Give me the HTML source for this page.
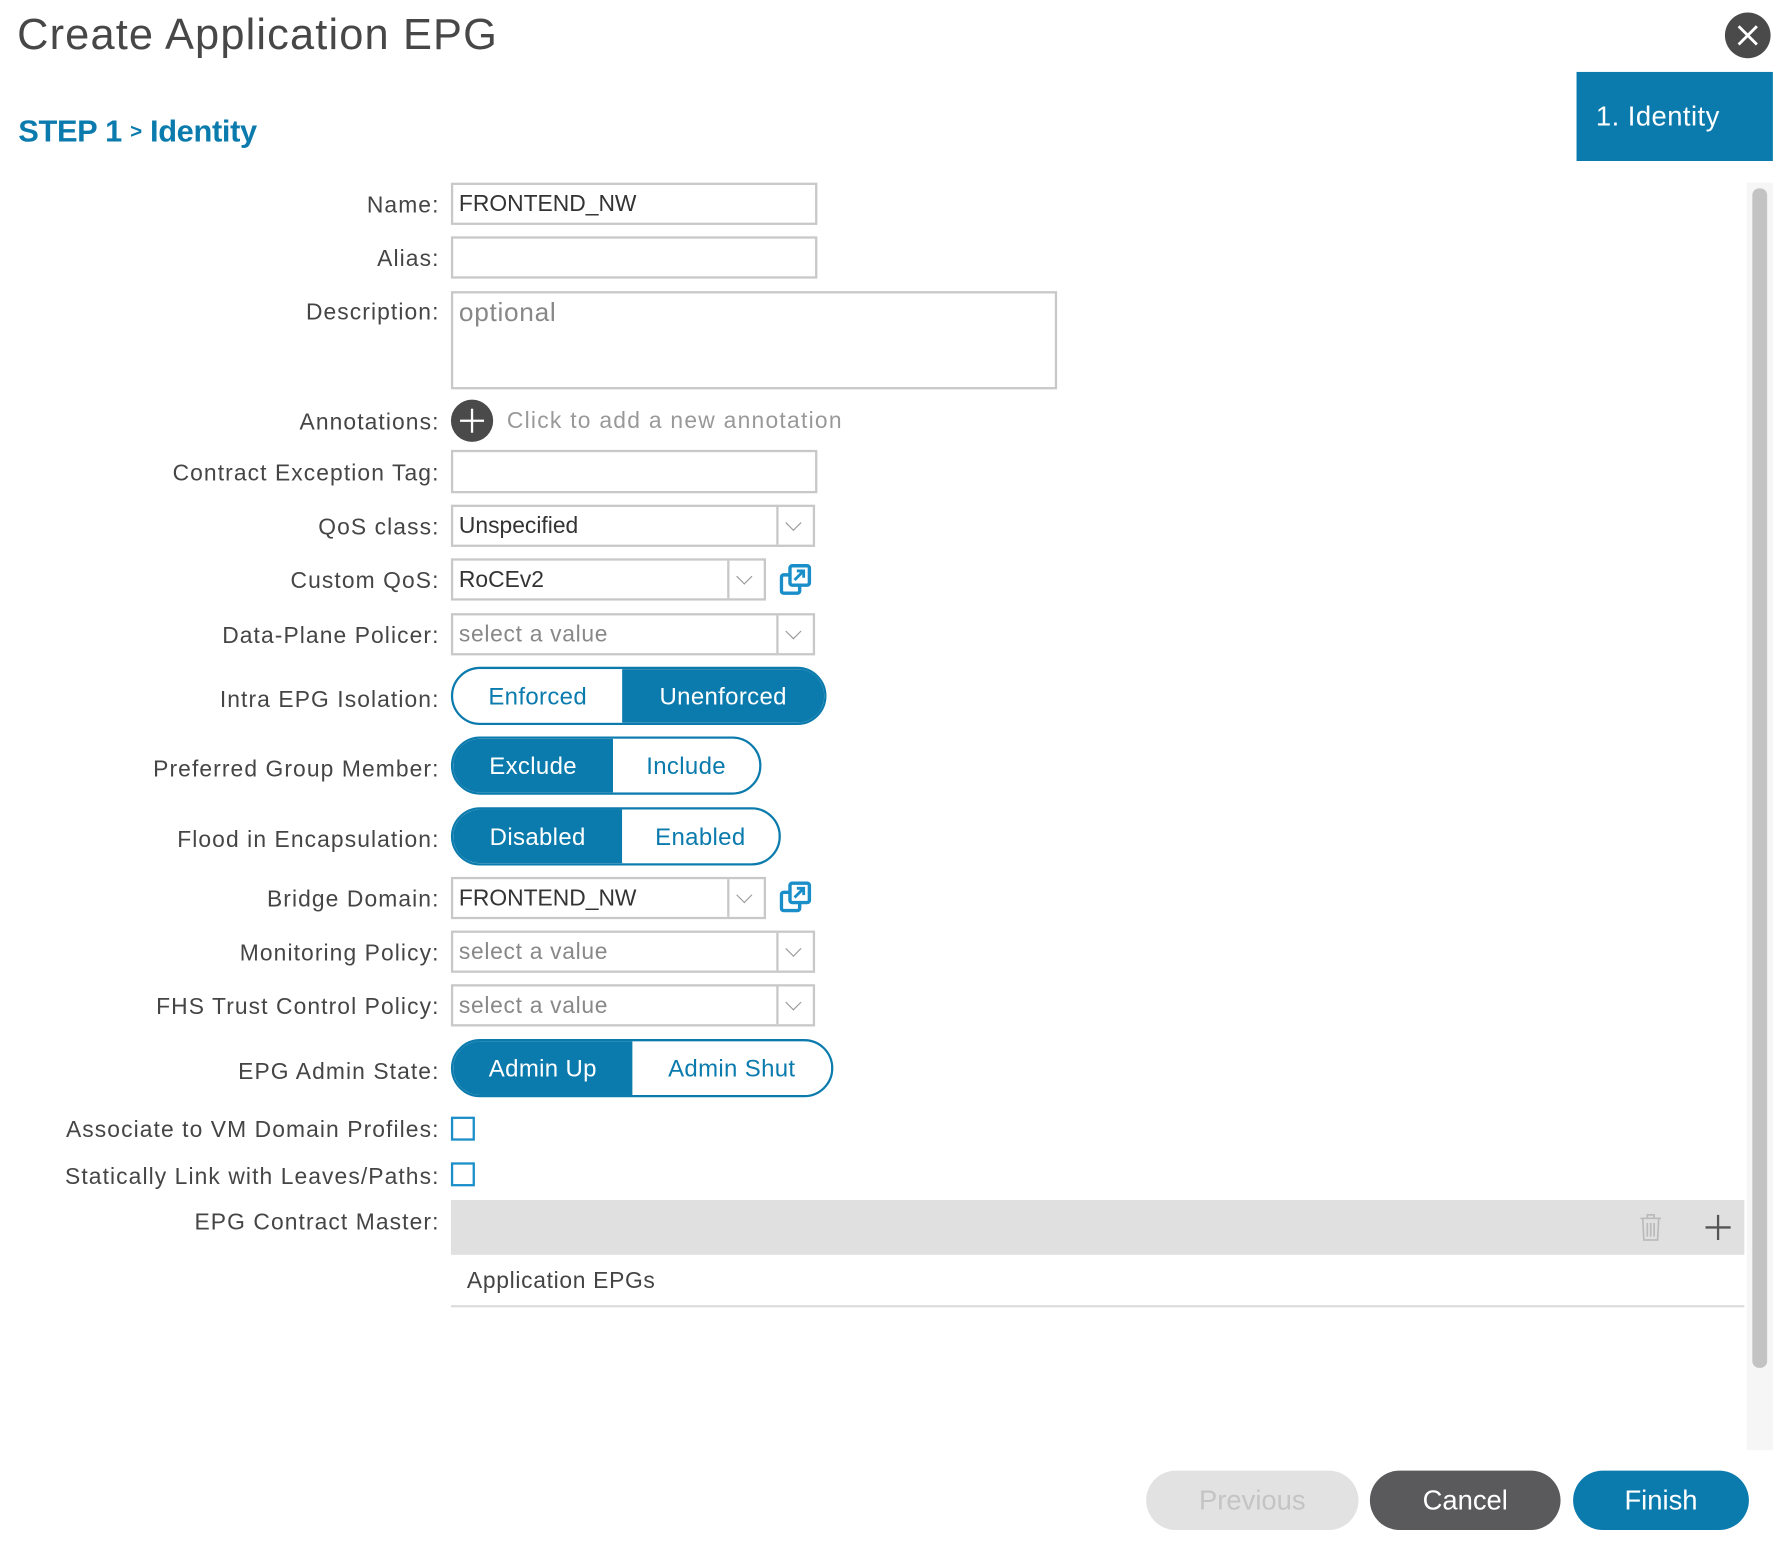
<!DOCTYPE html>
<html><head><meta charset="utf-8"><style>
html,body{margin:0;padding:0;background:#fff;overflow:hidden;width:1790px;height:1554px}
#w{position:absolute;left:0;top:0;width:1568px;height:1361px;transform:scale(1.14158,1.1418);transform-origin:0 0;font-family:"Liberation Sans",sans-serif;color:#444}
.a{position:absolute}
.l{position:absolute;right:1183px;font-size:20px;color:#454545;white-space:nowrap;line-height:24px;letter-spacing:0.95px;margin-top:2px}
.in{position:absolute;left:395px;border:2px solid #c8c8c8;box-sizing:border-box;background:#fff;font-size:20px;color:#333;padding-left:5px;line-height:35px}
.sel .dv{position:absolute;right:0;top:0;bottom:0;width:30px;border-left:2px solid #c8c8c8}
.sel .dv:after{content:"";position:absolute;left:8px;top:9px;width:9px;height:9px;border-right:1.5px solid #999;border-bottom:1.5px solid #999;transform:rotate(45deg)}
.ph{color:#888;letter-spacing:0.6px}
.tg{position:absolute;left:395px;height:51px;border:2px solid #0b7bad;border-radius:26px;box-sizing:border-box;overflow:hidden;display:flex;font-size:21px;letter-spacing:0.3px}
.tg div{display:flex;align-items:center;justify-content:center;color:#0b7bad;background:#fff;padding-top:3px}
.tg .on{background:#0b7bad;color:#fff}
.cb{position:absolute;left:395px;width:21px;height:21px;border:2px solid #1a8ec9;box-sizing:border-box;background:#fff}
.btn{position:absolute;top:1288px;height:52px;border-radius:26px;display:flex;align-items:center;justify-content:center;font-size:24px;padding-top:2px;box-sizing:border-box}
</style></head><body><div id="w">
<div class="a" style="left:15px;top:10px;font-size:38px;color:#474747;letter-spacing:1px">Create Application EPG</div>
<div class="a" style="left:1511px;top:11px;width:40px;height:40px;border-radius:50%;background:#4a4a4a"><svg width="40" height="40"><path d="M12 12L28 28M28 12L12 28" stroke="#fff" stroke-width="2.5"/></svg></div>
<div class="a" style="left:1381px;top:63px;width:172px;height:78px;background:#0b7bad;color:#fff;font-size:24px;line-height:80px;padding-left:17px;box-sizing:border-box;letter-spacing:0.4px">1. Identity</div>
<div class="a" style="left:16px;top:100px;font-size:27px;font-weight:bold;color:#0b7bad;letter-spacing:-0.3px">STEP 1 <span style="font-size:18px;position:relative;top:-3px">&gt;</span> Identity</div>
<div class="a" style="left:1530px;top:160px;width:23px;height:1110px;background:#f6f6f6"></div>
<div class="a" style="left:1535px;top:165px;width:13px;height:1033px;background:#c3c3c3;border-radius:6px"></div>

<div class="l" style="top:166px">Name:</div>
<div class="in" style="top:160px;width:321px;height:37px">FRONTEND_NW</div>
<div class="l" style="top:213px">Alias:</div>
<div class="in" style="top:207px;width:321px;height:37px"></div>
<div class="l" style="top:260px">Description:</div>
<div class="in ph" style="top:255px;width:531px;height:86px;font-size:23px;line-height:32px">optional</div>
<div class="l" style="top:356px">Annotations:</div>
<div class="a" style="left:395px;top:350px;width:37px;height:37px;border-radius:50%;background:#4a4a4a"><svg width="37" height="37"><path d="M18.5 8V29M8 18.5H29" stroke="#fff" stroke-width="2"/></svg></div>
<div class="a" style="left:444px;top:358px;font-size:20px;color:#999;letter-spacing:1.1px">Click to add a new annotation</div>
<div class="l" style="top:401px">Contract Exception Tag:</div>
<div class="in" style="top:394px;width:321px;height:38px"></div>
<div class="l" style="top:448px">QoS class:</div>
<div class="in sel" style="top:442px;width:319px;height:37px">Unspecified<div class="dv"></div></div>
<div class="l" style="top:495px">Custom QoS:</div>
<div class="in sel" style="top:489px;width:276px;height:37px">RoCEv2<div class="dv"></div></div>
<svg class="a" style="left:683px;top:494px" width="28" height="28"><rect x="1.5" y="9.5" width="16" height="16" rx="2" fill="none" stroke="#1a8ec9" stroke-width="3"/><rect x="9" y="1.5" width="17" height="17" rx="2" fill="#fff" stroke="#1a8ec9" stroke-width="3"/><path d="M13 14L21 6M15 6H21V12" stroke="#1a8ec9" stroke-width="2.5" fill="none"/></svg>
<div class="l" style="top:543px">Data-Plane Policer:</div>
<div class="in sel ph" style="top:537px;width:319px;height:37px">select a value<div class="dv"></div></div>
<div class="l" style="top:599px">Intra EPG Isolation:</div>
<div class="tg" style="top:584px;width:329px"><div style="width:148px">Enforced</div><div class="on" style="flex:1">Unenforced</div></div>
<div class="l" style="top:660px">Preferred Group Member:</div>
<div class="tg" style="top:645px;width:272px"><div class="on" style="width:140px">Exclude</div><div style="flex:1">Include</div></div>
<div class="l" style="top:722px">Flood in Encapsulation:</div>
<div class="tg" style="top:707px;width:289px"><div class="on" style="width:148px">Disabled</div><div style="flex:1">Enabled</div></div>
<div class="l" style="top:774px">Bridge Domain:</div>
<div class="in sel" style="top:768px;width:276px;height:37px">FRONTEND_NW<div class="dv"></div></div>
<svg class="a" style="left:683px;top:772px" width="28" height="28"><rect x="1.5" y="9.5" width="16" height="16" rx="2" fill="none" stroke="#1a8ec9" stroke-width="3"/><rect x="9" y="1.5" width="17" height="17" rx="2" fill="#fff" stroke="#1a8ec9" stroke-width="3"/><path d="M13 14L21 6M15 6H21V12" stroke="#1a8ec9" stroke-width="2.5" fill="none"/></svg>
<div class="l" style="top:821px">Monitoring Policy:</div>
<div class="in sel ph" style="top:815px;width:319px;height:37px">select a value<div class="dv"></div></div>
<div class="l" style="top:868px">FHS Trust Control Policy:</div>
<div class="in sel ph" style="top:862px;width:319px;height:37px">select a value<div class="dv"></div></div>
<div class="l" style="top:925px">EPG Admin State:</div>
<div class="tg" style="top:910px;width:335px"><div class="on" style="width:157px">Admin Up</div><div style="flex:1">Admin Shut</div></div>
<div class="l" style="top:976px">Associate to VM Domain Profiles:</div>
<div class="cb" style="top:978px"></div>
<div class="l" style="top:1017px">Statically Link with Leaves/Paths:</div>
<div class="cb" style="top:1018px"></div>
<div class="l" style="top:1057px">EPG Contract Master:</div>
<div class="a" style="left:395px;top:1051px;width:1133px;height:48px;background:#e0e0e0"></div>
<svg class="a" style="left:1433px;top:1062px" width="26" height="26"><path d="M4 5H22M10 5V2H16V5M6 5L7 24H19L20 5M10 9V21M13 9V21M16 9V21" stroke="#bbb" stroke-width="1.5" fill="none"/></svg>
<svg class="a" style="left:1493px;top:1063px" width="24" height="24"><path d="M12 1V23M1 12H23" stroke="#555" stroke-width="2"/></svg>
<div class="a" style="left:409px;top:1111px;font-size:20px;color:#444;letter-spacing:0.6px">Application EPGs</div>
<div class="a" style="left:395px;top:1143px;width:1133px;height:2px;background:#ddd"></div>

<div class="btn" style="left:1004px;width:186px;background:#e2e2e2;color:#c4c4c4">Previous</div>
<div class="btn" style="left:1200px;width:167px;background:#5a5a5c;color:#fff">Cancel</div>
<div class="btn" style="left:1378px;width:154px;background:#0b7bad;color:#fff">Finish</div>
</div></body></html>
